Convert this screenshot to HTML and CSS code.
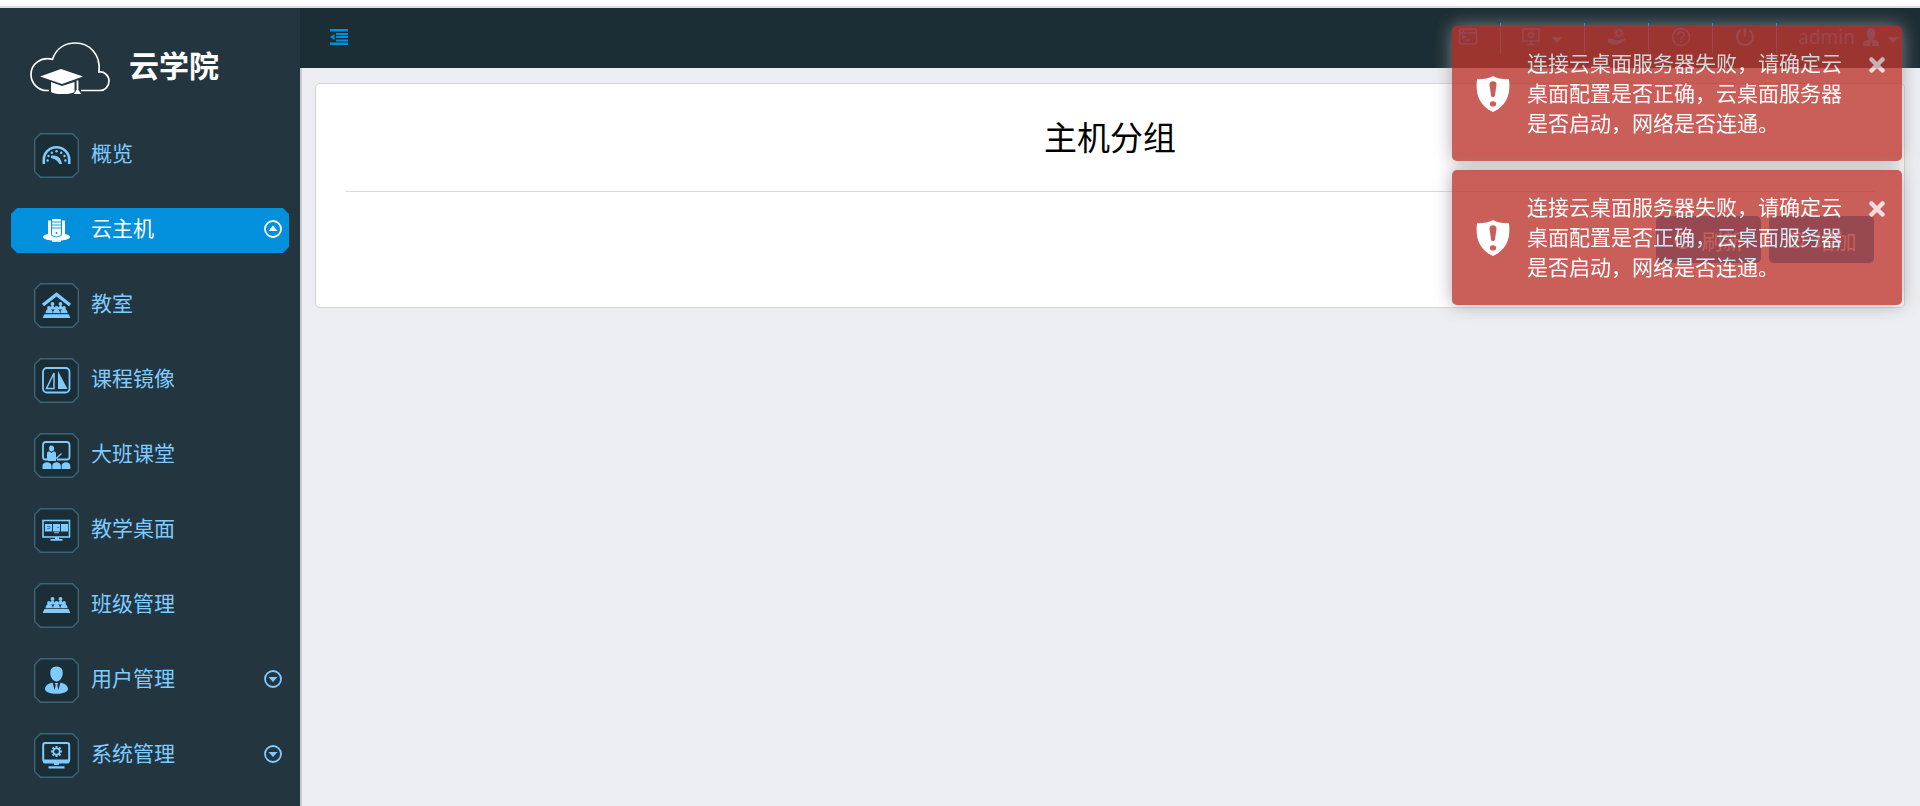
FILE: index.html
```html
<!DOCTYPE html>
<html lang="zh-CN">
<head>
<meta charset="utf-8">
<title>云学院 - 主机分组</title>
<link rel="stylesheet" href="styles.css">
</head>
<body>
<svg class="defs" aria-hidden="true">
  <symbol id="frame" viewBox="0 0 45 45"><path d="M6.500 .7h32l5.800 5.800v32l-5.800 5.800h-32l-5.800-5.800v-32z" fill="#1c2e35" stroke="#3a6478" stroke-width="1.400"/></symbol>
  <symbol id="down" viewBox="0 0 18 18"><circle cx="9" cy="9" r="8" fill="none" stroke="currentColor" stroke-width="1.800"/><path d="M4.500 7h9L9 12z" fill="currentColor"/></symbol>
  <symbol id="up" viewBox="0 0 18 18"><circle cx="9" cy="9" r="8" fill="none" stroke="currentColor" stroke-width="1.800"/><path d="M4.500 11h9L9 5.500z" fill="currentColor"/></symbol>
  <symbol id="crowd" viewBox="0 0 28 16"><g fill="currentColor"><circle cx="10" cy="2" r="1.900"/><circle cx="18" cy="2" r="1.900"/><path d="M7.300 7.500c0-5 5.400-5 5.400 0zM15.300 7.500c0-5 5.400-5 5.400 0z"/><circle cx="6.500" cy="6" r="1.900"/><circle cx="14" cy="6" r="1.900"/><circle cx="21.500" cy="6" r="1.900"/><path d="M3 11.300c0-6 7.300-6 7.300 0zM10.500 11.300c0-6 7-6 7 0zM17.800 11.300c0-6 7.300-6 7.300 0z"/><path d="M2 12h24l2 4H0z"/></g></symbol>
  <symbol id="shield" viewBox="0 0 34 36"><path fill="#fff" fill-rule="evenodd" d="M17 0c4 2.300 10 3.500 16 3.300 1.600 13-1 26-16 32.700C2 29.300-.6 16.300 1 3.300 7 3.500 13 2.300 17 0zM13.500 8.500l1.500 11c.4 2 3.600 2 4 0l1.500-11c.2-4.200-7.200-4.200-7 0zM17 25.300c-4.300 0-4.300 5.200 0 5.200s4.300-5.200 0-5.200z"/></symbol>
  <symbol id="gear" viewBox="0 0 12 12"><circle cx="6" cy="6" r="3.200" fill="none" stroke="currentColor" stroke-width="1.800"/><path d="M6 .4v2M6 9.600v2M.4 6h2M9.600 6h2M2 2l1.500 1.500M8.500 8.500L10 10M10 2L8.500 3.500M3.500 8.500L2 10" stroke="currentColor" stroke-width="2"/></symbol>
</svg>
<div class="strip"></div>
<div class="app">
  <aside class="sidebar">
    <a class="brand" href="#">
      <svg width="80" height="52" viewBox="0 0 80 52" aria-hidden="true">
        <path d="M19 48.500h-2A16 16 0 0 1 1 32.500C1 22 11 14.500 22.500 17.300 27 4 38 1 45.500 1 59 1 71 12 69 30c5-1 10 3.500 10 9 0 5.500-4 9.500-9 9.500H51" fill="none" stroke="#fff" stroke-width="1.700"/>
        <path d="M10 34.500L31 27l22 7.500L32 42zM21 40l11 4 12.500-4v10c-6 3-18 3-23.500 0z" fill="#fff"/>
        <path d="M47.500 38.500V49M45.500 51l2-3 2 3z" stroke="#fff" stroke-width="1.800" fill="#fff"/>
      </svg>
      <span class="brand-name">云学院</span>
    </a>
    <nav>
      <ul class="menu">
        <li><a class="item" href="#">
          <svg class="icon" viewBox="0 0 45 45"><use href="#frame"/><path d="M9.800 31v-4.500a12.700 12.200 0 0 1 25.400 0V31" fill="none" stroke="currentColor" stroke-width="2.600"/><g fill="currentColor"><circle cx="22.500" cy="18.300" r="1.200"/><circle cx="17.800" cy="19.700" r="1.200"/><circle cx="27.200" cy="19.700" r="1.200"/><circle cx="14.500" cy="23" r="1.200"/><circle cx="30.500" cy="23" r="1.200"/><circle cx="13.600" cy="27.500" r="1.200"/><circle cx="31.400" cy="27.500" r="1.200"/><path d="M17 22.800c5-1.500 10 1 11 8.200h-2.500c-2-3-3.500-4-5.500-5l-3-1z"/></g></svg>
          <span class="label">概览</span></a></li>
        <li><a class="item active" href="#">
          <svg class="icon" viewBox="0 0 45 45"><ellipse cx="22.500" cy="29" rx="13.500" ry="3.800" fill="currentColor"/><path d="M14 12.500h3.200v15H14zM27.800 12.500H31v15h-3.200zM18 11h9v18h-9z" fill="currentColor"/><path d="M17.600 12v15.500l4.900 1.500 4.900-1.500V12M18 14h9M18 17h9M18 20h9" fill="none" stroke="#028fdb" stroke-width=".9"/><circle cx="22.500" cy="25" r="1" fill="#028fdb"/><path d="M18 33h9" stroke="currentColor" stroke-width="1.500"/></svg>
          <span class="label">云主机</span><svg class="arrow"><use href="#up"/></svg></a></li>
        <li><a class="item" href="#">
          <svg class="icon" viewBox="0 0 45 45"><use href="#frame"/><path d="M9 22L22.500 11.500 36 22" fill="none" stroke="currentColor" stroke-width="3.400"/><use href="#crowd" x="8.500" y="19" width="28" height="16"/><path d="M9 30.700h27" stroke="#1c2e35"/></svg>
          <span class="label">教室</span></a></li>
        <li><a class="item" href="#">
          <svg class="icon" viewBox="0 0 45 45"><use href="#frame"/><rect x="9" y="10" width="26.500" height="24.500" rx="4" fill="none" stroke="currentColor" stroke-width="1.800"/><path d="M20 15v15.500h-7.500z" fill="none" stroke="currentColor" stroke-width="1.500"/><path d="M24 13v18h9.500z" fill="currentColor"/></svg>
          <span class="label">课程镜像</span></a></li>
        <li><a class="item" href="#">
          <svg class="icon" viewBox="0 0 45 45"><use href="#frame"/><path d="M13 26.500h-1.500A2.500 2.500 0 0 1 9 24V12a3 3 0 0 1 3-3h20.500a3 3 0 0 1 3 3v12a2.500 2.500 0 0 1-2.500 2.500H23" fill="none" stroke="currentColor" stroke-width="1.800"/><g fill="currentColor"><ellipse cx="17.500" cy="15.500" rx="2.500" ry="3"/><path d="M13 27v-6c0-3 2-3 4.500-1 2.500-2 4.500-2 4.500 1v7h-8zM8.500 36v-3c0-5 9-5 9 0v3zM18.300 36v-3c0-5 8.500-5 8.500 0v3zM27.600 36v-3c0-5 8.700-5 8.700 0v3z"/></g><path d="M21 26.500l6.500-6" stroke="currentColor" stroke-width="1.200"/></svg>
          <span class="label">大班课堂</span></a></li>
        <li><a class="item" href="#">
          <svg class="icon" viewBox="0 0 45 45"><use href="#frame"/><rect x="9" y="12.500" width="26.500" height="16.500" fill="none" stroke="currentColor" stroke-width="1.600"/><g fill="currentColor"><path d="M11 16h7v7.500h-7zM19 16h7v7.500h-7zM27 16h7v7.500h-7zM21 29h4v2h-4zM16.500 31h12v1.800h-12zM20 24.200h5v1h-5z"/></g><path d="M13 18.500h3v2h-3M23 19.500h2" fill="none" stroke="#286fa5" stroke-width=".8"/></svg>
          <span class="label">教学桌面</span></a></li>
        <li><a class="item" href="#">
          <svg class="icon" viewBox="0 0 45 45"><use href="#frame"/><use href="#crowd" x="8.500" y="14" width="28" height="16"/></svg>
          <span class="label">班级管理</span></a></li>
        <li><a class="item" href="#">
          <svg class="icon" viewBox="0 0 45 45"><use href="#frame"/><g fill="currentColor"><path d="M22.500 8.500c4.500 0 6.500 3 6.200 7-.3 4-2.700 8-6.200 8s-5.900-4-6.200-8c-.3-4 1.700-7 6.200-7z"/><path d="M18.500 24.500L20.700 32l1-5-1-2h3.600l-1 2 1 5 2.200-7.500c4 1 7.500 3 7.500 6.500 0 3-5 4.800-11.500 4.800S11 34 11 31c0-3.500 3.500-5.500 7.500-6.500z"/></g></svg>
          <span class="label">用户管理</span><svg class="arrow"><use href="#down"/></svg></a></li>
        <li><a class="item" href="#">
          <svg class="icon" viewBox="0 0 45 45"><use href="#frame"/><rect x="9.200" y="10" width="26" height="18.500" rx="2" fill="none" stroke="currentColor" stroke-width="2"/><path d="M9 26.500h26.500V29a2 2 0 0 1-2 1.500h-22.500a2 2 0 0 1-2-1.500zM20 30h5v2h-5zM14.500 33.200h16v2.200h-16z" fill="currentColor"/><use href="#gear" x="16.500" y="12.500" width="12" height="12"/></svg>
          <span class="label">系统管理</span><svg class="arrow"><use href="#down"/></svg></a></li>
      </ul>
    </nav>
  </aside>
  <div class="page">
    <header class="topbar">
      <button class="toggle" type="button" aria-label="收起菜单"><svg width="18" height="16" viewBox="0 0 18 16"><path d="M0 0h18v2.500H0zM6 4h12v2H6zM6 7h12v2H6zM6 10.500h12v2H6zM0 13.500h18V16H0zM4.500 5v6L0 8z" fill="currentColor"/></svg></button>
      <div class="tools">
        <button class="tool" type="button" aria-label="控制台"><svg width="20" height="18" viewBox="0 0 20 18"><g fill="none" stroke="currentColor" stroke-width="1.500"><rect x="1.500" y="1" width="17" height="15" rx="2"/><path d="M2 5h16M4 7.500l3 1.500-3 1.500M7 12h5M4 3h2"/></g></svg></button>
        <button class="tool" type="button" aria-label="系统设置"><svg width="18" height="18" viewBox="0 0 18 18"><path d="M1 1h16v12H1zM9 13v3M5 16.500h8" fill="none" stroke="currentColor" stroke-width="1.500"/><use href="#gear" x="5" y="3" width="8" height="8"/></svg><span class="caret"></span></button>
        <button class="tool" type="button" aria-label="服务"><svg width="20" height="18" viewBox="0 0 20 18"><use href="#gear" x="7" y="0" width="10" height="10"/><path d="M1 11l3-.5c3 0 4 2 7 2l6-2c1.500 0 2 1 1 2l-7 4H5l-4-2z" fill="currentColor"/></svg></button>
        <button class="tool" type="button" aria-label="帮助"><svg width="20" height="20" viewBox="0 0 20 20"><g fill="none" stroke="currentColor" stroke-width="1.600"><circle cx="10" cy="10" r="8.500"/><path d="M7 8c0-4 6-4 6 0 0 2-3 2-3 4.500M10 14v1.600"/></g></svg></button>
        <button class="tool" type="button" aria-label="关机"><svg width="20" height="20" viewBox="0 0 20 20"><path d="M6 3a8 8 0 1 0 8 0M10 1v9" fill="none" stroke="currentColor" stroke-width="2.200"/></svg></button>
        <button class="tool user" type="button">admin<svg width="16" height="18" viewBox="0 0 16 18"><path d="M8 0c6 0 5 9 1.500 11l5 2c1.500.8 1.500 2 1.500 5H9.500L8 13l-1.500 5H0c0-3 0-4.200 1.500-5l5-2C3 9 2 0 8 0z" fill="currentColor"/></svg><span class="caret"></span></button>
      </div>
    </header>
    <main class="content">
      <section class="card">
        <h1 class="title">主机分组</h1>
        <div class="actions">
          <button class="btn" type="button"><svg width="18" height="18" viewBox="0 0 18 18"><path d="M15 5a7.500 7.500 0 1 0 1.500 5M16 1v5h-5" fill="none" stroke="currentColor" stroke-width="2"/></svg>刷新</button>
          <button class="btn" type="button"><svg width="18" height="18" viewBox="0 0 18 18"><path d="M9 5v8M5 9h8" stroke="currentColor" stroke-width="2"/><circle cx="9" cy="9" r="7.500" fill="none" stroke="currentColor" stroke-width="2"/></svg>增加</button>
        </div>
      </section>
    </main>
  </div>
</div>
<div class="toasts" role="alert">
  <div class="toast">
    <svg class="shield" aria-hidden="true"><use href="#shield"/></svg>
    <p class="message">连接云桌面服务器失败，请确定云桌面配置是否正确，云桌面服务器是否启动，网络是否连通。</p>
    <button class="close" type="button" aria-label="关闭"><svg width="16" height="16" viewBox="0 0 16 16"><path d="M2.500 2.500l11 11M13.500 2.500l-11 11" stroke="currentColor" stroke-width="4.500" stroke-linecap="round"/></svg></button>
  </div>
  <div class="toast">
    <svg class="shield" aria-hidden="true"><use href="#shield"/></svg>
    <p class="message">连接云桌面服务器失败，请确定云桌面配置是否正确，云桌面服务器是否启动，网络是否连通。</p>
    <button class="close" type="button" aria-label="关闭"><svg width="16" height="16" viewBox="0 0 16 16"><path d="M2.500 2.500l11 11M13.500 2.500l-11 11" stroke="currentColor" stroke-width="4.500" stroke-linecap="round"/></svg></button>
  </div>
</div>
</body>
</html>
```

FILE: styles.css
```css
* { box-sizing: border-box; }

body {
  display: flex;
  flex-direction: column;
  min-height: 100vh;
  margin: 0;
  background: #edeef3;
  color: #000;
  font-family: "Noto Sans CJK SC", sans-serif;
  font-size: 21px;
  line-height: 30px;
}

button {
  margin: 0;
  padding: 0;
  border: 0;
  background: none;
  font: inherit;
  cursor: pointer;
}

svg { display: block; flex: none; }
a { text-decoration: none; }
.defs { position: absolute; width: 0; height: 0; }

.strip {
  height: 8px;
  border-bottom: 2px solid #dcdfe0;
  background: #fff;
}

.app { display: flex; flex: 1; }

/* Sidebar */
.sidebar {
  flex: none;
  width: 300px;
  background: #233640;
}

.brand {
  display: flex;
  align-items: center;
  gap: 19px;
  padding: 34px 30px 0;
  color: #fff;
}

.brand-name {
  padding-bottom: 8px;
  font-size: 30px;
  font-weight: 700;
  line-height: 44px;
}

.menu {
  display: flex;
  flex-direction: column;
  gap: 30px;
  margin: 0;
  padding: 39px 11px 0;
  list-style: none;
}

.item {
  display: flex;
  align-items: center;
  gap: 12px;
  height: 45px;
  padding: 0 7px 0 23px;
  color: #7fcbff;
}

.item.active {
  background: #028fdb;
  color: #fff;
  clip-path: polygon(6px 0, calc(100% - 6px) 0, 100% 6px, 100% calc(100% - 6px), calc(100% - 6px) 100%, 6px 100%, 0 calc(100% - 6px), 0 6px);
}

.icon { width: 45px; height: 45px; }
.label { flex: 1; padding-bottom: 7px; }
.arrow { width: 18px; height: 18px; margin-bottom: 3px; }

/* Top bar */
.page {
  display: flex;
  flex: 1;
  flex-direction: column;
  min-width: 0;
}

.topbar {
  display: flex;
  justify-content: space-between;
  height: 60px;
  background: #1c2e35;
}

.toggle { padding: 0 30px 2px; color: #028fdb; }
.tools { display: flex; padding-top: 15px; }

.tool {
  display: flex;
  align-items: center;
  justify-content: center;
  gap: 11px;
  min-width: 64px;
  height: 30px;
  padding: 0 21px 2px;
  color: #028fdb;
}

.tool + .tool { border-left: 1px solid #028fdb; }
.user { gap: 8px; font-family: "Noto Sans", "Noto Sans CJK SC", sans-serif; font-size: 19px; }

.caret {
  border: 6px solid transparent;
  border-top-color: currentColor;
  border-bottom: 0;
  margin-top: 6px;
}

/* Content */
.content {
  flex: 1;
  padding: 15px 15px 15px 13px;
  border-left: 2px solid #ccc8cf;
}

.card {
  padding: 0 30px 44px;
  border: 1px solid #d4d4d4;
  border-radius: 5px;
  background: #fff;
}

.title {
  margin: 0;
  padding: 28px 0 31px;
  border-bottom: 1px solid #dadada;
  font-size: 33px;
  font-weight: 400;
  line-height: 48px;
  text-align: center;
}

.actions {
  display: flex;
  justify-content: flex-end;
  gap: 8px;
  padding-top: 24px;
}

.btn {
  display: flex;
  align-items: center;
  justify-content: center;
  gap: 10px;
  width: 105px;
  height: 47px;
  border-radius: 5px;
  background: #028fdb;
  color: #fff;
}

/* Notifications */
.toasts {
  position: fixed;
  top: 26px;
  right: 18px;
  display: flex;
  flex-direction: column;
  gap: 9px;
  width: 450px;
}

.toast {
  display: flex;
  align-items: center;
  padding: 21px 17px 21px 24px;
  border-radius: 5px;
  background: #bd362f;
  box-shadow: 0 0 18px #999;
  color: #fff;
  opacity: .8;
}

.shield { width: 34px; height: 36px; }
.message { flex: 1; margin: 0 20px 0 17px; padding-bottom: 3px; }
.close { align-self: flex-start; padding-top: 10px; color: #fff; opacity: .8; }
```
